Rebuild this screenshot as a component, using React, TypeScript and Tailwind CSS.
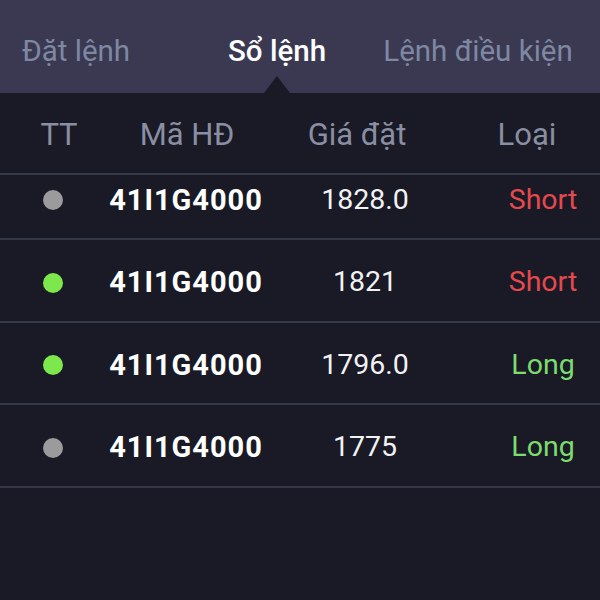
import React from "react";

const orders = [
  { live: false, code: "41I1G4000", price: "1828.0", side: "Short" },
  { live: true, code: "41I1G4000", price: "1821", side: "Short" },
  { live: true, code: "41I1G4000", price: "1796.0", side: "Long" },
  { live: false, code: "41I1G4000", price: "1775", side: "Long" },
];

export default function App() {
  return (
    <div
      className="w-[600px] h-[600px] bg-[#191a25] flex flex-col overflow-hidden"
      style={{ fontFamily: "Roboto, 'Noto Sans', sans-serif" }}
    >
      <div className="h-[93px] bg-[#3a3951] flex items-center pt-[10px] shrink-0 relative">
        <div className="w-[152px] flex justify-center text-[29.5px] text-[#7e88a3]">Đặt lệnh</div>
        <div className="w-[250px] flex justify-center text-[29.5px] font-medium text-white">Sổ lệnh</div>
        <div className="w-[152px] flex justify-center whitespace-nowrap text-[29.5px] text-[#7e88a3]">
          Lệnh điều kiện
        </div>
        <div className="absolute bottom-0 left-[264px] w-0 h-0 border-l-[13px] border-r-[13px] border-b-[17px] border-l-transparent border-r-transparent border-b-[#191a25]" />
      </div>
      <div className="h-[82px] shrink-0 flex items-center pt-[4px] border-b-2 border-[#353847] text-[31px] text-[#8a8ea2]">
        <div className="w-[118px] text-center">TT</div>
        <div className="w-[138px] text-center">Mã HĐ</div>
        <div className="w-[202px] text-center">Giá đặt</div>
        <div className="w-[138px] text-center">Loại</div>
      </div>
      <div className="flex-1 overflow-hidden">
        <ul className="-mt-[17.5px]">
          {orders.map((o, i) => (
            <li key={i} className="h-[82.5px] flex items-center pt-[5px] border-b-2 border-[#353847]">
              <div className="w-[106px] flex justify-center">
                <span className={"w-[20px] h-[20px] rounded-full " + (o.live ? "bg-[#7de84b]" : "bg-[#9b9b9e]")} />
              </div>
              <div className="w-[160px] text-center text-[29px] font-bold text-white tracking-[1px]">{o.code}</div>
              <div className="w-[198px] text-center text-[28.5px] text-[#f2f2f4]">{o.price}</div>
              <div
                className={
                  "ml-auto w-[114px] text-center text-[28.5px] " +
                  (o.side === "Short" ? "text-[#e5494e]" : "text-[#7ddc6f]")
                }
              >
                {o.side}
              </div>
            </li>
          ))}
        </ul>
      </div>
    </div>
  );
}
